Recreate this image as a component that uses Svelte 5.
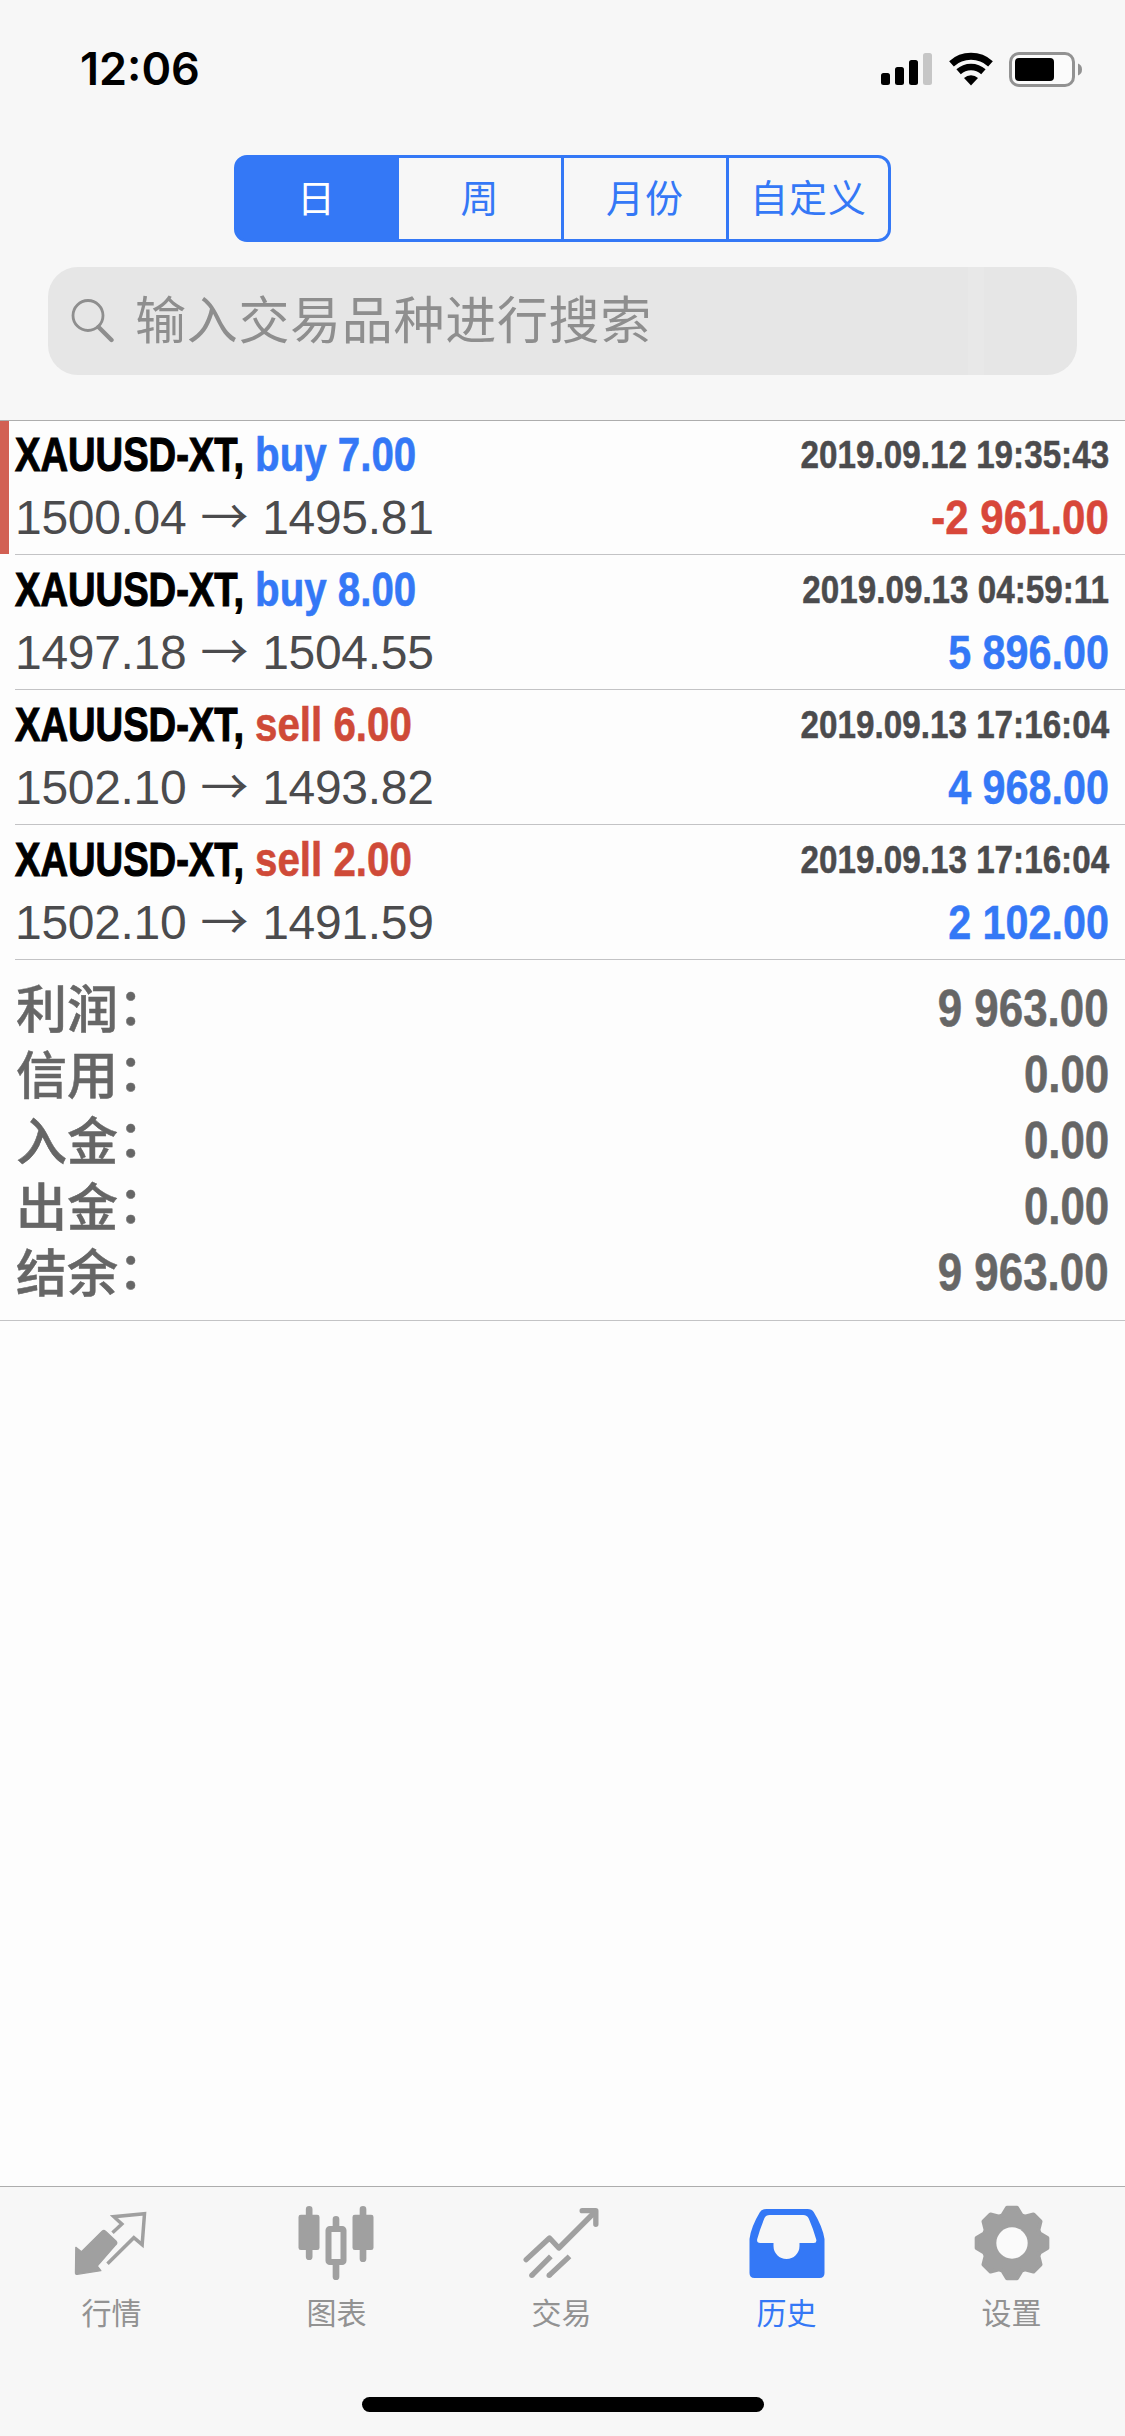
<script lang="ts">
  type Deal = {
    symbol: string;
    side: 'buy' | 'sell';
    volume: string;
    open: string;
    close: string;
    time: string;
    profit: string;
    marked?: boolean;
  };

  const periods = ['日', '周', '月份', '自定义'];
  let period = $state('日');
  let activeTab = $state('history');

  const deals: Deal[] = [
    { symbol: 'XAUUSD-XT', side: 'buy', volume: '7.00', open: '1500.04', close: '1495.81', time: '2019.09.12 19:35:43', profit: '-2 961.00', marked: true },
    { symbol: 'XAUUSD-XT', side: 'buy', volume: '8.00', open: '1497.18', close: '1504.55', time: '2019.09.13 04:59:11', profit: '5 896.00' },
    { symbol: 'XAUUSD-XT', side: 'sell', volume: '6.00', open: '1502.10', close: '1493.82', time: '2019.09.13 17:16:04', profit: '4 968.00' },
    { symbol: 'XAUUSD-XT', side: 'sell', volume: '2.00', open: '1502.10', close: '1491.59', time: '2019.09.13 17:16:04', profit: '2 102.00' },
  ];

  const totals = [
    { label: '利润', value: '9 963.00' },
    { label: '信用', value: '0.00' },
    { label: '入金', value: '0.00' },
    { label: '出金', value: '0.00' },
    { label: '结余', value: '9 963.00' },
  ];

  const tabs = [
    { id: 'quotes', label: '行情' },
    { id: 'charts', label: '图表' },
    { id: 'trade', label: '交易' },
    { id: 'history', label: '历史' },
    { id: 'settings', label: '设置' },
  ];

  // gear outline: 8 teeth around (120, 120)
  function gear() {
    const pts: string[] = [];
    for (let i = 0; i < 8; i++) {
      for (const [deg, r] of [[-8, 107], [8, 107], [19, 88], [26, 88]]) {
        const a = ((i * 45 + deg) * Math.PI) / 180;
        pts.push(`${(120 + r * Math.sin(a)).toFixed(1)} ${(120 - r * Math.cos(a)).toFixed(1)}`);
      }
    }
    return 'M' + pts.join('L') + 'Z';
  }
</script>

<div class="screen">
  <header>
    <div class="status">
      <span class="clock">12:06</span>
      <div class="indicators">
        <svg width="52" height="34" viewBox="0 0 52 34">
          <rect x="0" y="21" width="9" height="12" rx="2.5" />
          <rect x="14" y="15" width="9" height="18" rx="2.5" />
          <rect x="28" y="8" width="9" height="25" rx="2.5" />
          <rect x="42" y="1" width="9" height="32" rx="2.5" fill="#c6c6c6" />
        </svg>
        <svg width="46" height="34" viewBox="0 0 46 34" fill="none" stroke="#000">
          <path d="M3.500 11.800A29.200 29.200 0 0 1 42.500 11.800" stroke-width="7" />
          <path d="M10.600 19.800A18.500 18.500 0 0 1 35.400 19.800" stroke-width="6.600" />
          <path d="M16 26A10.500 10.500 0 0 1 30 26L23 33.500Z" fill="#000" stroke="none" />
        </svg>
        <svg width="74" height="36" viewBox="0 0 74 36">
          <rect x="1.500" y="1.500" width="63" height="32" rx="8.500" fill="#fbfbfb" stroke="#929292" stroke-width="3" />
          <rect x="6" y="6" width="39" height="23" rx="4" />
          <path d="M69 11.500Q73 13 73 17.500T69 23.500Z" fill="#929292" />
        </svg>
      </div>
    </div>

    <div class="segments">
      {#each periods as p}
        <button class:on={period === p} onclick={() => (period = p)}>{p}</button>
      {/each}
    </div>

    <div class="search">
      <svg width="44" height="44" viewBox="0 0 44 44" fill="none" stroke="#8e8e8e">
        <circle cx="17" cy="16.500" r="15" stroke-width="2.800" />
        <path d="M27.500 28L40.500 41" stroke-width="4.400" stroke-linecap="round" />
      </svg>
      <span>输入交易品种进行搜索</span>
    </div>
  </header>

  <main>
    {#each deals as deal}
      <div class="deal" class:marked={deal.marked}>
        <div class="body">
          <div class="line">
            <div class="title cond">{deal.symbol}, <span class={deal.side}>{deal.side} {deal.volume}</span></div>
            <div class="time cond">{deal.time}</div>
          </div>
          <div class="line">
            <div class="prices">{deal.open}<span class="arrow">→</span>{deal.close}</div>
            <div class="profit cond" class:loss={deal.profit.startsWith('-')}>{deal.profit}</div>
          </div>
        </div>
      </div>
    {/each}

    <div class="totals">
      {#each totals as t}
        <div class="total">
          <span class="label">{t.label}<span class="colon">：</span></span>
          <span class="value cond">{t.value}</span>
        </div>
      {/each}
    </div>
  </main>

  <nav>
    <div class="tabs">
      {#each tabs as tab}
        <button class="tab" class:active={activeTab === tab.id} onclick={() => (activeTab = tab.id)}>
          {#if tab.id === 'quotes'}
            <svg viewBox="97.5 99 240 240">
              <path d="M109 232L126 245L188 184Q193 179 198 184L230 214Q234 219 229 224L173 288L184 302L113 313Q107 313 108 306Z" fill="currentColor" stroke="currentColor" stroke-width="4" stroke-linejoin="round" />
              <path d="M219 188L247 162L223 140L315 131L308 224L283 203L204 281" fill="none" stroke="currentColor" stroke-width="10.500" />
            </svg>
          {:else if tab.id === 'charts'}
            <svg viewBox="772.5 99 240 240">
              <g fill="none" stroke="currentColor" stroke-width="20" stroke-linecap="round">
                <path d="M809 118V260M970.500 118V266M889.500 148V170M889.500 284V320" />
              </g>
              <g fill="currentColor">
                <rect x="777" y="134" width="63" height="106" rx="7" />
                <rect x="939" y="134" width="63" height="106" rx="7" />
              </g>
              <rect x="867" y="177" width="45" height="99" rx="4" fill="none" stroke="currentColor" stroke-width="18" />
            </svg>
          {:else if tab.id === 'trade'}
            <svg viewBox="127.5 99 240 240">
              <g fill="none" stroke="currentColor" stroke-width="16" stroke-linejoin="round">
                <path d="M140 269L210 204L238 234L346 126" stroke-linecap="round" />
                <path d="M308 122H349V163" stroke-linecap="round" />
                <path d="M157 316L214 259M209 316L270 259" />
              </g>
              <g fill="currentColor">
                <circle cx="157" cy="316" r="8" />
                <circle cx="209" cy="316" r="8" />
              </g>
            </svg>
          {:else if tab.id === 'history'}
            <svg viewBox="799.5 99 240 240">
              <path fill="currentColor" fill-rule="evenodd" d="M858 117H981Q994 117 1000 127Q1026 170 1032 207V309Q1032 324 1017 324H822Q807 324 807 309V207Q812 170 838 127Q844 117 858 117ZM868 135Q856 135 852 144Q838 178 830 208Q828 219 839 219H879V228A39 39 0 0 0 957 228V219H1000Q1010 219 1007 208Q999 178 985 146Q980 135 968 135Z" />
            </svg>
          {:else}
            <svg viewBox="0 0 240 240">
              <path d={gear()} fill="currentColor" stroke="currentColor" stroke-width="12" stroke-linejoin="round" />
              <circle cx="120" cy="120" r="47" fill="#fafafa" />
            </svg>
          {/if}
          <span>{tab.label}</span>
        </button>
      {/each}
    </div>
    <div class="home"></div>
  </nav>
</div>

<style>
:global(body) {
  margin: 0;
  background: #fdfdfd;
}
.screen {
  display: flex;
  flex-direction: column;
  width: 1125px;
  height: 2436px;
  background: #fdfdfd;
  font-family: "Liberation Sans", "Noto Sans CJK SC", sans-serif;
  overflow: hidden;
}
button {
  margin: 0;
  padding: 0;
  border: 0;
  background: none;
  font-family: inherit;
}

header {
  box-sizing: border-box;
  height: 421px;
  background: #f7f7f7;
  border-bottom: 1px solid #adadad;
}
.status {
  display: flex;
  justify-content: space-between;
  box-sizing: border-box;
  height: 155px;
  padding: 52px 42px 0 80px;
}
.clock {
  font: 600 45px/34px Inter, sans-serif;
}
.indicators {
  display: flex;
  gap: 15px;
}
.segments {
  display: grid;
  grid-template-columns: 159px 165px 165px 162px;
  box-sizing: border-box;
  width: 657px;
  height: 87px;
  margin-left: 234px;
  border: 3px solid #3478f6;
  border-radius: 13px;
}
.segments button {
  height: 81px;
  padding-top: 2px;
  color: #3478f6;
  font-size: 38px;
  line-height: 79px;
  letter-spacing: 1px;
  border-left: 3px solid #3478f6;
}
.segments button:first-child {
  border-left: 0;
  border-radius: 9px 0 0 9px;
}
.segments .on {
  background: #3478f6;
  box-shadow: 0 0 0 2px #3478f6;
  color: #fff;
}
.search {
  display: flex;
  align-items: center;
  gap: 20px;
  box-sizing: border-box;
  width: 1029px;
  height: 108px;
  margin: 25px 0 0 48px;
  padding-left: 23px;
  border-radius: 30px;
  background: linear-gradient(90deg, transparent 920px, #e8e8e8 920px 936px, transparent 936px) #e6e6e6;
  color: #8e8e8e;
  font-size: 51px;
  letter-spacing: 0.7px;
}
.search span {
  padding-bottom: 8px;
}

main {
  flex: 1;
}
.deal {
  height: 135px;
  padding-left: 15px;
}
.marked {
  background: linear-gradient(#d26053, #d26053) 0 0 / 9px 133px no-repeat;
}
.body {
  box-sizing: border-box;
  height: 134px;
  padding: 1px 16px 0 0;
  border-bottom: 1px solid #c3c3c5;
}
.line {
  display: flex;
  justify-content: space-between;
  height: 63px;
  line-height: 66px;
  white-space: nowrap;
}
/* condensed bold: the regular bold face squeezed horizontally */
.cond {
  font-weight: 700;
  transform: scaleX(0.86);
  transform-origin: right;
  -webkit-text-stroke: 0.5px;
}
.title {
  font-size: 48px;
  color: #000;
  transform: scaleX(0.795);
  transform-origin: left;
  -webkit-text-stroke: 1.1px;
}
.title span {
  display: inline-block;
  margin-left: 1px;
  transform: scaleX(1.055);
  transform-origin: left;
  -webkit-text-stroke: 0.6px;
}
.buy {
  color: #3478f6;
}
.sell {
  color: #cf4a38;
}
.time {
  font-size: 39px;
  line-height: 65px;
  color: #4b4b4d;
  transform: scaleX(0.852);
}
.prices {
  font-size: 48px;
  letter-spacing: -0.3px;
  line-height: 66px;
  color: #4b4b4d;
}
.arrow {
  margin: 0 14px;
  font-family: "Noto Sans CJK SC", sans-serif;
  line-height: 1;
}
.profit {
  font-size: 48px;
  color: #3478f6;
}
.profit.loss {
  color: #d8473a;
  transform: scaleX(0.875);
}

.totals {
  box-sizing: border-box;
  height: 360px;
  padding: 14px 16px 0;
  border-bottom: 1px solid #c3c3c5;
  color: #666;
}
.total {
  display: flex;
  justify-content: space-between;
  height: 66px;
  line-height: 68px;
  font-size: 51px;
}
.label {
  font-family: "Noto Sans CJK SC", sans-serif;
  font-weight: 500;
  line-height: 62px;
  -webkit-text-stroke: 0.5px;
}
.colon {
  font-family: "Noto Sans CJK TC", sans-serif;
  font-feature-settings: "halt";
}

nav {
  box-sizing: border-box;
  height: 250px;
  border-top: 1px solid #adadad;
  background: #f7f7f7;
}
.tabs {
  display: grid;
  grid-template-columns: repeat(5, 225px);
  height: 210px;
  margin-left: -1px;
}
.tab {
  display: flex;
  flex-direction: column;
  align-items: center;
  padding-top: 16px;
  color: #a0a0a0;
}
.tab svg {
  width: 80px;
  height: 80px;
}
.tab span {
  margin-top: 9px;
  font-size: 30px;
  line-height: 44px;
  color: #929292;
}
.tab.active,
.tab.active span {
  color: #3478f6;
}
.home {
  width: 402px;
  height: 15px;
  margin: 0 auto;
  border-radius: 8px;
  background: #000;
}
</style>
